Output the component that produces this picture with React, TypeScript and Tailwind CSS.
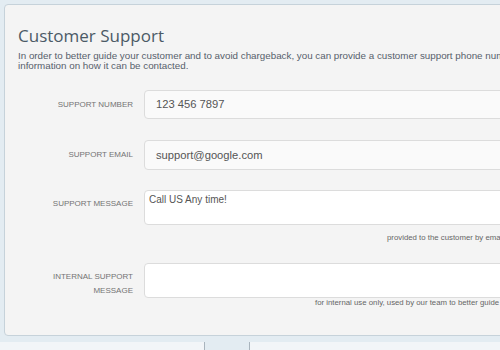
import React from "react";

function Label({ children }: { children: React.ReactNode }) {
  return (
    <div className="w-[115px] shrink-0 text-right text-[8px] uppercase leading-[14px] text-[#737373]">
      {children}
    </div>
  );
}

export default function App() {
  const sans = { fontFamily: '"Liberation Sans", Arial, sans-serif' };
  return (
    <div className="h-[350px] w-[500px] overflow-hidden bg-[#e3ecf2]" style={sans}>
      <div className="pl-1 pt-1">
        <div className="h-[332px] w-[900px] rounded-[4px] border border-[#c6d2da] bg-[#f4f4f4] pl-[13px] pt-[19px]">
          <h1 className="text-[17px] leading-[24px] text-[#4b5a66]" style={{ fontFamily: '"Open Sans", sans-serif' }}>
            Customer Support
          </h1>
          <p className="mt-[3px] text-[9.8px] leading-[10px] text-[#56606b]">
            In order to better guide your customer and to avoid chargeback, you can provide a customer support phone number, email and
            <br />
            information on how it can be contacted.
          </p>

          <div className="mt-[19px] flex flex-col">
            <div className="flex items-center gap-[11px]">
              <Label>Support Number</Label>
              <div className="flex h-[29px] w-[700px] items-center rounded-[4px] border border-[#dcdcdc] bg-[#fafafa] pl-[11px] text-[11.2px] text-[#555]">
                123 456 7897
              </div>
            </div>
            <div className="mt-[21px] flex items-center gap-[11px]">
              <Label>Support Email</Label>
              <div className="flex h-[30px] w-[700px] items-center rounded-[4px] border border-[#dcdcdc] bg-[#fafafa] pl-[11px] text-[11.2px] text-[#555]">
                support@google.com
              </div>
            </div>
            <div className="mt-[20px] flex items-start gap-[11px]">
              <div className="pt-[7px]">
                <Label>Support Message</Label>
              </div>
              <div className="h-[35px] w-[700px] rounded-[4px] border border-[#dcdcdc] bg-white pl-[4px] pt-[2px] text-[10px] leading-[14px] text-[#555]">
                Call US Any time!
              </div>
            </div>
            <div className="whitespace-nowrap pl-[369px] pt-[8px] text-[7.8px] leading-[10px] text-[#666]">
              provided to the customer by email and phone
            </div>
            <div className="mt-[20px] flex items-start gap-[11px]">
              <div className="pt-[7px]">
                <div className="w-[115px] text-right text-[8px] uppercase leading-[14px] text-[#737373]">
                  Internal Support
                  <br />
                  Message
                </div>
              </div>
              <div className="h-[35px] w-[700px] rounded-[4px] border border-[#dcdcdc] bg-white" />
            </div>
            <div className="whitespace-nowrap pl-[297px] pt-0 text-[7.8px] leading-[10px] text-[#666]">
              for internal use only, used by our team to better guide your customer
            </div>
          </div>
        </div>
      </div>
      <div className="mt-[6px] flex h-[10px] bg-[#f2f5f8] pl-[204px]">
        <div className="h-full w-[46px] border-x border-[#a9b4bd] bg-[#e3ecf2]" />
      </div>
    </div>
  );
}
